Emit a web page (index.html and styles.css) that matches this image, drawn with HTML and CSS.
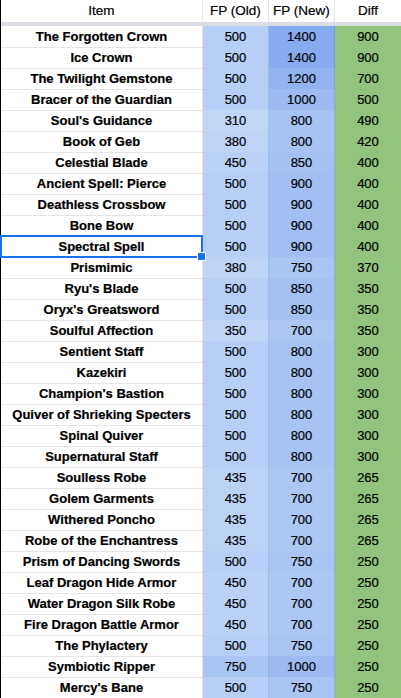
FILE: index.html
```html
<!DOCTYPE html>
<html>
<head>
<meta charset="utf-8">
<link rel="stylesheet" href="styles.css">
</head>
<body>
<div class="sheet">
  <div class="row head">
    <div class="cell name">Item</div>
    <div class="cell">FP (Old)</div>
    <div class="cell">FP (New)</div>
    <div class="cell">Diff</div>
  </div>
  <div class="freeze"></div>
  <div class="row"><div class="cell name">The Forgotten Crown</div><div class="cell num" style="background:rgb(183,206,246)">500</div><div class="cell num" style="background:rgb(134,172,239)">1400</div><div class="cell num diff">900</div></div>
  <div class="row"><div class="cell name">Ice Crown</div><div class="cell num" style="background:rgb(183,206,246)">500</div><div class="cell num" style="background:rgb(134,172,239)">1400</div><div class="cell num diff">900</div></div>
  <div class="row"><div class="cell name">The Twilight Gemstone</div><div class="cell num" style="background:rgb(183,206,246)">500</div><div class="cell num" style="background:rgb(145,180,240)">1200</div><div class="cell num diff">700</div></div>
  <div class="row"><div class="cell name">Bracer of the Guardian</div><div class="cell num" style="background:rgb(183,206,246)">500</div><div class="cell num" style="background:rgb(156,187,242)">1000</div><div class="cell num diff">500</div></div>
  <div class="row"><div class="cell name">Soul's Guidance</div><div class="cell num" style="background:rgb(193,214,247)">310</div><div class="cell num" style="background:rgb(167,195,243)">800</div><div class="cell num diff">490</div></div>
  <div class="row"><div class="cell name">Book of Geb</div><div class="cell num" style="background:rgb(190,211,246)">380</div><div class="cell num" style="background:rgb(167,195,243)">800</div><div class="cell num diff">420</div></div>
  <div class="row"><div class="cell name">Celestial Blade</div><div class="cell num" style="background:rgb(186,208,246)">450</div><div class="cell num" style="background:rgb(164,193,243)">850</div><div class="cell num diff">400</div></div>
  <div class="row"><div class="cell name">Ancient Spell: Pierce</div><div class="cell num" style="background:rgb(183,206,246)">500</div><div class="cell num" style="background:rgb(161,191,243)">900</div><div class="cell num diff">400</div></div>
  <div class="row"><div class="cell name">Deathless Crossbow</div><div class="cell num" style="background:rgb(183,206,246)">500</div><div class="cell num" style="background:rgb(161,191,243)">900</div><div class="cell num diff">400</div></div>
  <div class="row"><div class="cell name">Bone Bow</div><div class="cell num" style="background:rgb(183,206,246)">500</div><div class="cell num" style="background:rgb(161,191,243)">900</div><div class="cell num diff">400</div></div>
  <div class="row"><div class="cell name selected">Spectral Spell</div><div class="cell num" style="background:rgb(183,206,246)">500</div><div class="cell num" style="background:rgb(161,191,243)">900</div><div class="cell num diff">400</div></div>
  <div class="row"><div class="cell name">Prismimic</div><div class="cell num" style="background:rgb(190,211,246)">380</div><div class="cell num" style="background:rgb(169,197,244)">750</div><div class="cell num diff">370</div></div>
  <div class="row"><div class="cell name">Ryu's Blade</div><div class="cell num" style="background:rgb(183,206,246)">500</div><div class="cell num" style="background:rgb(164,193,243)">850</div><div class="cell num diff">350</div></div>
  <div class="row"><div class="cell name">Oryx's Greatsword</div><div class="cell num" style="background:rgb(183,206,246)">500</div><div class="cell num" style="background:rgb(164,193,243)">850</div><div class="cell num diff">350</div></div>
  <div class="row"><div class="cell name">Soulful Affection</div><div class="cell num" style="background:rgb(191,212,247)">350</div><div class="cell num" style="background:rgb(172,199,244)">700</div><div class="cell num diff">350</div></div>
  <div class="row"><div class="cell name">Sentient Staff</div><div class="cell num" style="background:rgb(183,206,246)">500</div><div class="cell num" style="background:rgb(167,195,243)">800</div><div class="cell num diff">300</div></div>
  <div class="row"><div class="cell name">Kazekiri</div><div class="cell num" style="background:rgb(183,206,246)">500</div><div class="cell num" style="background:rgb(167,195,243)">800</div><div class="cell num diff">300</div></div>
  <div class="row"><div class="cell name">Champion's Bastion</div><div class="cell num" style="background:rgb(183,206,246)">500</div><div class="cell num" style="background:rgb(167,195,243)">800</div><div class="cell num diff">300</div></div>
  <div class="row"><div class="cell name">Quiver of Shrieking Specters</div><div class="cell num" style="background:rgb(183,206,246)">500</div><div class="cell num" style="background:rgb(167,195,243)">800</div><div class="cell num diff">300</div></div>
  <div class="row"><div class="cell name">Spinal Quiver</div><div class="cell num" style="background:rgb(183,206,246)">500</div><div class="cell num" style="background:rgb(167,195,243)">800</div><div class="cell num diff">300</div></div>
  <div class="row"><div class="cell name">Supernatural Staff</div><div class="cell num" style="background:rgb(183,206,246)">500</div><div class="cell num" style="background:rgb(167,195,243)">800</div><div class="cell num diff">300</div></div>
  <div class="row"><div class="cell name">Soulless Robe</div><div class="cell num" style="background:rgb(187,209,246)">435</div><div class="cell num" style="background:rgb(172,199,244)">700</div><div class="cell num diff">265</div></div>
  <div class="row"><div class="cell name">Golem Garments</div><div class="cell num" style="background:rgb(187,209,246)">435</div><div class="cell num" style="background:rgb(172,199,244)">700</div><div class="cell num diff">265</div></div>
  <div class="row"><div class="cell name">Withered Poncho</div><div class="cell num" style="background:rgb(187,209,246)">435</div><div class="cell num" style="background:rgb(172,199,244)">700</div><div class="cell num diff">265</div></div>
  <div class="row"><div class="cell name">Robe of the Enchantress</div><div class="cell num" style="background:rgb(187,209,246)">435</div><div class="cell num" style="background:rgb(172,199,244)">700</div><div class="cell num diff">265</div></div>
  <div class="row"><div class="cell name">Prism of Dancing Swords</div><div class="cell num" style="background:rgb(183,206,246)">500</div><div class="cell num" style="background:rgb(169,197,244)">750</div><div class="cell num diff">250</div></div>
  <div class="row"><div class="cell name">Leaf Dragon Hide Armor</div><div class="cell num" style="background:rgb(186,208,246)">450</div><div class="cell num" style="background:rgb(172,199,244)">700</div><div class="cell num diff">250</div></div>
  <div class="row"><div class="cell name">Water Dragon Silk Robe</div><div class="cell num" style="background:rgb(186,208,246)">450</div><div class="cell num" style="background:rgb(172,199,244)">700</div><div class="cell num diff">250</div></div>
  <div class="row"><div class="cell name">Fire Dragon Battle Armor</div><div class="cell num" style="background:rgb(186,208,246)">450</div><div class="cell num" style="background:rgb(172,199,244)">700</div><div class="cell num diff">250</div></div>
  <div class="row"><div class="cell name">The Phylactery</div><div class="cell num" style="background:rgb(183,206,246)">500</div><div class="cell num" style="background:rgb(169,197,244)">750</div><div class="cell num diff">250</div></div>
  <div class="row"><div class="cell name">Symbiotic Ripper</div><div class="cell num" style="background:rgb(169,197,244)">750</div><div class="cell num" style="background:rgb(156,187,242)">1000</div><div class="cell num diff">250</div></div>
  <div class="row"><div class="cell name">Mercy's Bane</div><div class="cell num" style="background:rgb(183,206,246)">500</div><div class="cell num" style="background:rgb(169,197,244)">750</div><div class="cell num diff">250</div></div>
</div>
</body>
</html>
```
FILE: styles.css
```css
* { box-sizing: border-box; }
html, body { margin: 0; padding: 0; background: #fff; }
body {
  font-family: "Liberation Sans", Arial, sans-serif;
  font-size: 13px;
  color: #000;
}
.sheet {
  width: 401px;
  border-left: 1px solid #000;
}
.row {
  display: grid;
  grid-template-columns: 202px 66px 66px 66px;
  height: 21px;
}
.cell {
  border-right: 1px solid rgba(0, 0, 0, 0.1);
  border-bottom: 1px solid rgba(0, 0, 0, 0.1);
  padding-top: 1px;
  line-height: 20px;
  text-align: center;
  white-space: nowrap;
  -webkit-text-stroke: 0.2px #000;
}
.row.head { height: 22px; }
.head .cell {
  border-bottom: none;
  padding-top: 0;
  line-height: 22px;
  font-size: 13.5px;
}
.row .cell:last-child { border-right: none; }
.name { font-weight: bold; }
.head .name { font-weight: normal; }
.num { font-weight: normal; }
.diff { background: #93c47d; }
.freeze {
  height: 4px;
  background: #dadde3;
}
.selected { position: relative; }
.selected::after {
  content: "";
  position: absolute;
  left: -1px;
  top: -1px;
  right: -1px;
  bottom: -1px;
  border: 2px solid #1a73e8;
  pointer-events: none;
}
.selected::before {
  content: "";
  position: absolute;
  right: -4px;
  bottom: -4px;
  width: 7px;
  height: 7px;
  background: #1a73e8;
  border: 1px solid #fff;
  z-index: 2;
}
```
